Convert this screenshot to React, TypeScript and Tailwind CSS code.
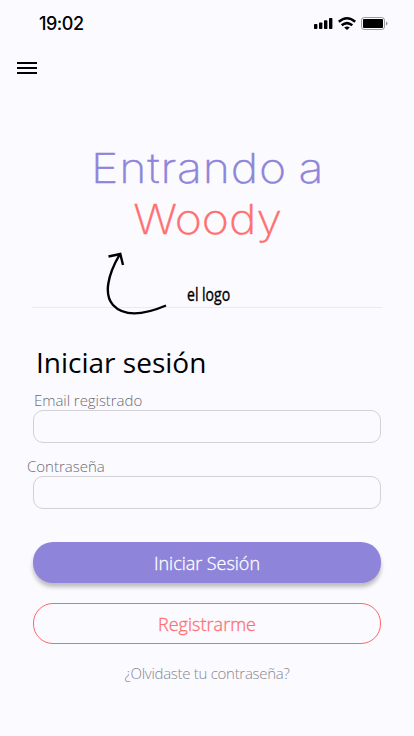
function StatusBar() {
  return (
    <header className="flex h-[46px] items-center justify-between pl-[39px] pr-[26px]">
      <time className="mt-0.5 font-['Inter',sans-serif] text-[18px] leading-6 font-medium tracking-[-0.5px]">19:02</time>
      <svg width="74" height="16" viewBox="314 15 74 16" aria-hidden="true">
        <g fill="#000">
          <rect x="314" y="24" width="3.4" height="5" rx=".8" />
          <rect x="319" y="22.4" width="3.4" height="6.6" rx=".8" />
          <rect x="324" y="20.2" width="3.4" height="8.8" rx=".8" />
          <rect x="329" y="18" width="3.4" height="11" rx=".8" />
          <path d="M344.2 27.4q2.8-2 5.6 0L347 30z" />
          <rect x="363" y="19" width="20" height="9" rx="1" />
          <path d="M386 21.5v4q1.5-.6 1.5-2t-1.5-2" opacity=".4" />
        </g>
        <g fill="none" stroke="#000" strokeWidth="2.5">
          <path d="M338.8 21.7q8.2-7 16.4 0" />
          <path d="M341.7 25.3q5.3-4.4 10.6 0" />
        </g>
        <rect x="361.5" y="17.5" width="23" height="12" rx="2.8" fill="none" stroke="#000" strokeOpacity=".38" />
      </svg>
    </header>
  );
}

function Field({ label, shift }: { label: string; shift: string }) {
  return (
    <label className="block h-[66px]">
      <span className={`block h-[19px] text-[15px] leading-[19px] font-light whitespace-nowrap text-[#6c6b70] ${shift}`}>{label}</span>
      <input className="block h-[33px] w-full rounded-[10px] border border-[#d2d1d8] bg-transparent px-3 outline-none" />
    </label>
  );
}

export default function App() {
  return (
    <main className="h-[736px] w-[414px] overflow-hidden bg-[#fbfaff] font-['Open_Sans',sans-serif] text-black">
      <StatusBar />
      <button className="mt-4 ml-[17px] flex h-3 w-5 flex-col justify-between" aria-label="Menú">
        <span className="h-0.5 w-full bg-black" />
        <span className="h-0.5 w-full bg-black" />
        <span className="h-0.5 w-full bg-black" />
      </button>
      <h1 className="mt-[69px] h-[101px] scale-x-[1.13] pl-px text-center font-['Inter',sans-serif] text-[41px] leading-[51px] font-extralight whitespace-nowrap [-webkit-text-stroke:0.35px_currentColor]">
        <span className="block tracking-[0.7px] text-[#8e84d9] [word-spacing:-2px]">Entrando a</span>
        <span className="block text-[#ff6f70]">Woody</span>
      </h1>
      <section className="mx-8 flex h-[64px] w-[350px] border-b border-[#ebeaf2]">
        <svg className="mt-1 ml-[70px] shrink-0 overflow-visible" width="70" height="70" viewBox="102 248 70 70" fill="none" stroke="#000" strokeWidth="2.4" aria-hidden="true">
          <path d="M120 254C107 276 104 295 113 305C125 318 146 314 166 305.5" />
          <path d="M108.5 256.5L120.3 254L123 265" />
        </svg>
        <span className="mt-[38px] ml-[15px] h-6 origin-left scale-x-[0.78] font-['Open_Sans',sans-serif] text-[18px] leading-6 font-normal whitespace-nowrap [-webkit-text-stroke:0.4px_currentColor]">el logo</span>
      </section>
      <form className="mx-[33px] w-[348px]">
        <h2 className="mt-[34px] ml-[3px] h-[41px] text-[28px] leading-10 whitespace-nowrap">Iniciar sesión</h2>
        <div className="mt-[8px]">
          <Field label="Email registrado" shift="pl-px tracking-[-0.05px]" />
          <Field label="Contraseña" shift="-ml-[6px]" />
        </div>
        <button type="button" className="mt-[19px] block h-[41px] w-full rounded-[20px] bg-[#8e84d9] pt-0.5 text-[18px] font-light tracking-[-0.03px] text-white shadow-[0_4px_4px_rgba(0,0,0,0.25)] [-webkit-text-stroke:0.3px_currentColor]">Iniciar Sesión</button>
        <button type="button" className="mt-5 block h-[41px] w-full rounded-[20px] border border-[#ff6667] pt-0.5 text-[18px] font-light tracking-[0.03px] text-[#ff6f70] [-webkit-text-stroke:0.3px_currentColor]">Registrarme</button>
      </form>
      <a className="mt-[18px] block text-center text-[15px] leading-[22px] font-light tracking-[-0.29px] text-[#87868c]">¿Olvidaste tu contraseña?</a>
    </main>
  );
}
